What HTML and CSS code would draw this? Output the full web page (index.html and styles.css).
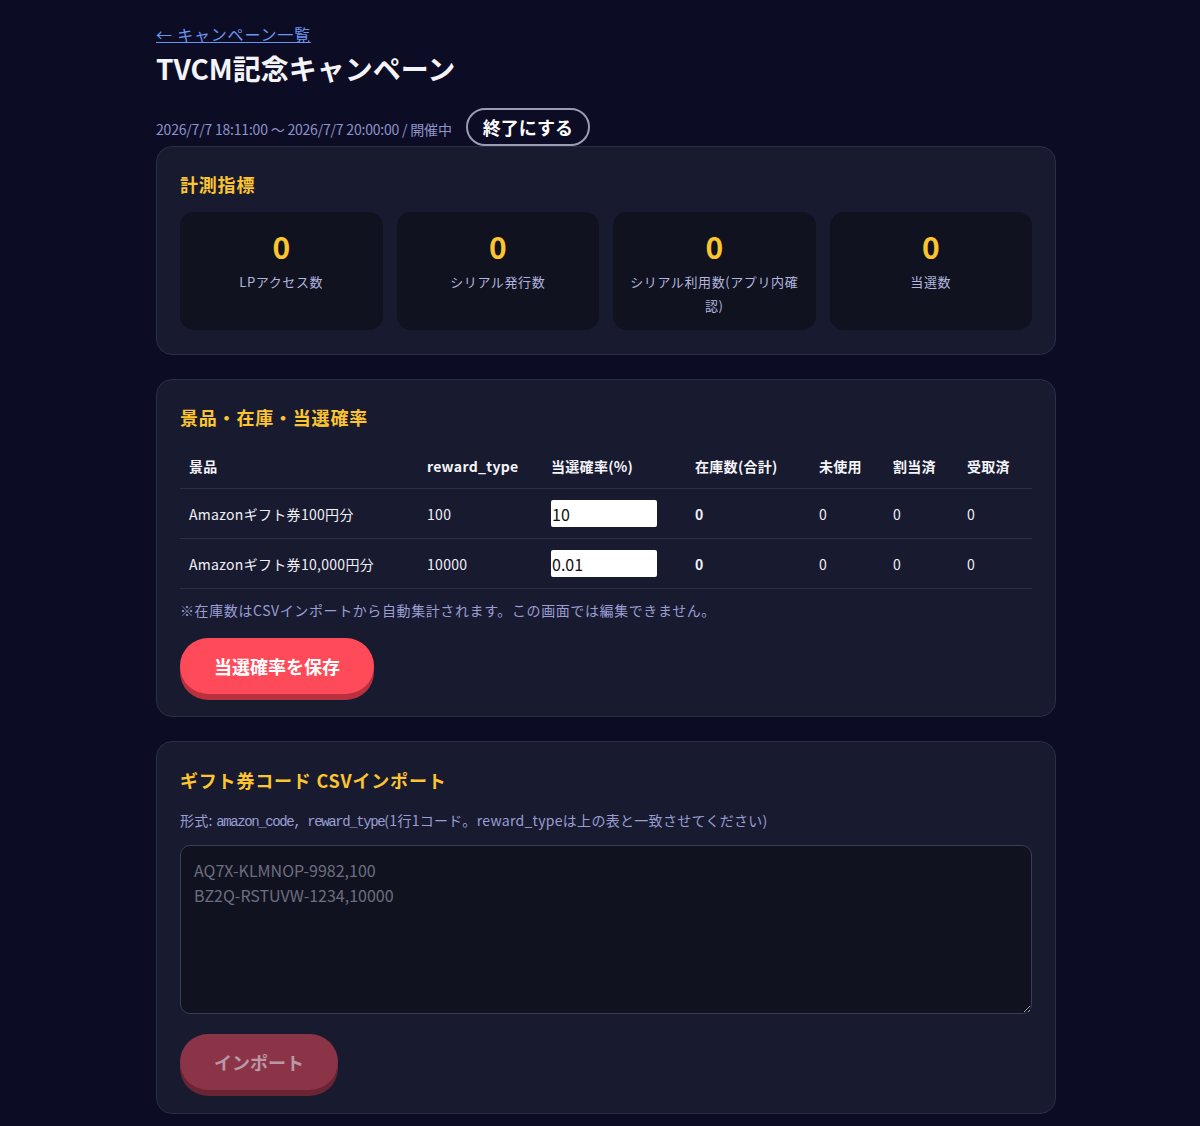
FILE: index.html
```html
<!DOCTYPE html>
<html lang="ja">
<head>
  <meta charset="UTF-8" />
  <meta name="viewport" content="width=device-width, initial-scale=1.0"/>
  <title>TVCM記念キャンペーン - 管理</title>
  <link rel="stylesheet" href="styles.css">
</head>
<body>
  <div class="page">
    <a class="back" href="#">← キャンペーン一覧</a>
    <h1>TVCM記念キャンペーン</h1>

    <div class="period">
      <span>2026/7/7 18:11:00 〜 2026/7/7 20:00:00 / 開催中</span>
      <button class="btn-outline">終了にする</button>
    </div>

    <section class="card card-stats">
      <h2>計測指標</h2>
      <div class="stats">
        <div class="stat"><div class="stat-num">0</div><div class="stat-label">LPアクセス数</div></div>
        <div class="stat"><div class="stat-num">0</div><div class="stat-label">シリアル発行数</div></div>
        <div class="stat"><div class="stat-num">0</div><div class="stat-label">シリアル利用数(アプリ内確認)</div></div>
        <div class="stat"><div class="stat-num">0</div><div class="stat-label">当選数</div></div>
      </div>
    </section>

    <section class="card">
      <h2>景品・在庫・当選確率</h2>
      <table class="prizes">
        <thead>
          <tr>
            <th class="c-name">景品</th>
            <th class="c-type">reward_type</th>
            <th class="c-rate">当選確率(%)</th>
            <th class="c-stock">在庫数(合計)</th>
            <th class="c-small">未使用</th>
            <th class="c-small">割当済</th>
            <th>受取済</th>
          </tr>
        </thead>
        <tbody>
          <tr>
            <td>Amazonギフト券100円分</td>
            <td>100</td>
            <td><input class="rate" type="text" value="10"></td>
            <td class="bold">0</td>
            <td>0</td>
            <td>0</td>
            <td>0</td>
          </tr>
          <tr>
            <td>Amazonギフト券10,000円分</td>
            <td>10000</td>
            <td><input class="rate" type="text" value="0.01"></td>
            <td class="bold">0</td>
            <td>0</td>
            <td>0</td>
            <td>0</td>
          </tr>
        </tbody>
      </table>
      <p class="note">※在庫数はCSVインポートから自動集計されます。この画面では編集できません。</p>
      <button class="btn-primary">当選確率を保存</button>
    </section>

    <section class="card card-import">
      <h2>ギフト券コード CSVインポート</h2>
      <p class="note format">形式: <code>amazon_code, reward_type</code>(1行1コード。reward_typeは上の表と一致させてください)</p>
      <textarea class="csv" placeholder="AQ7X-KLMNOP-9982,100&#10;BZ2Q-RSTUVW-1234,10000"></textarea>
      <button class="btn-primary" disabled>インポート</button>
    </section>
  </div>
</body>
</html>
```

FILE: styles.css
```css
body {
  background-color: #0c0d24;
  color: #f4f4f8;
  font-family: 'Noto Sans CJK JP', 'Noto Sans', sans-serif;
  margin: 0;
  padding: 0;
}

.page {
  width: 900px;
  margin: 0 0 0 156px;
  padding: 22px 0 12px;
}

.back {
  display: inline-block;
  color: #6e93f0;
  font-size: 16px;
  line-height: 24px;
  letter-spacing: 0.8px;
  text-decoration: underline;
}

h1 {
  font-size: 28px;
  font-weight: 700;
  margin: 2px 0 0;
  line-height: 40px;
}

.period {
  display: flex;
  align-items: center;
  gap: 14px;
  margin-top: 20px;
  color: #8e93c9;
  font-size: 14px;
}

.period span {
  margin-top: 4px;
  letter-spacing: -0.2px;
}

.btn-outline {
  background: transparent;
  color: #fff;
  border: 2px solid #9a9cb4;
  border-radius: 999px;
  font-family: inherit;
  font-size: 18px;
  font-weight: 700;
  height: 38px;
  padding: 0 15px;
  cursor: pointer;
}

.card {
  background: #181a30;
  border: 1px solid #2b2e4a;
  border-radius: 16px;
  padding: 23px 23px 22px;
  margin-bottom: 24px;
}

.card-stats {
  padding-bottom: 24px;
}

.card-stats h2 {
  margin-bottom: 14px;
}

.card-import {
  padding-top: 24px;
  padding-bottom: 23px;
}

h2 {
  color: #fcc530;
  font-size: 18px;
  font-weight: 700;
  line-height: 28px;
  letter-spacing: 0.8px;
  margin: 0 0 13px;
}

.stats {
  display: grid;
  grid-template-columns: repeat(4, 1fr);
  gap: 14px;
}

.stat {
  background: #11121f;
  border-radius: 14px;
  height: 118px;
  box-sizing: border-box;
  padding: 15px 16px 0;
  text-align: center;
}

.stat-num {
  color: #fcc530;
  font-size: 30px;
  font-weight: 700;
  line-height: 38px;
}

.stat-label {
  color: #b2b6df;
  font-size: 13px;
  line-height: 24px;
  letter-spacing: 0.6px;
  margin-top: 5px;
}

.prizes {
  width: 100%;
  border-collapse: collapse;
  margin-top: 18px;
}

.prizes th,
.prizes td {
  text-align: left;
  padding: 0 9px;
  border-bottom: 1px solid #2b2e48;
  font-size: 14px;
}

.prizes th {
  font-weight: 700;
  color: #f4f4f8;
  height: 33px;
  padding-bottom: 6px;
  letter-spacing: 0.3px;
}

.prizes td {
  height: 49px;
  color: #f0f0f6;
  letter-spacing: 0.3px;
}

.prizes .c-name { width: 220px; }
.prizes .c-type { width: 106px; }
.prizes .c-rate { width: 126px; }
.prizes .c-stock { width: 106px; }
.prizes .c-small { width: 56px; }

.prizes td.bold {
  font-weight: 700;
}

.rate {
  width: 106px;
  height: 27px;
  box-sizing: border-box;
  border: none;
  border-radius: 2px;
  background: #fff;
  color: #111;
  font-family: 'Noto Sans CJK JP', sans-serif;
  font-size: 16px;
  padding: 0 1px;
}

.note {
  color: #9a9ed2;
  font-size: 14px;
  letter-spacing: 0.6px;
  margin: 10px 0 17px;
  line-height: 22px;
}

.format {
  margin: 0 0 12px;
  padding-top: 2px;
  letter-spacing: 0.3px;
}

.format code {
  font-family: 'Liberation Mono', monospace;
  font-size: 14px;
  letter-spacing: -1.4px;
}

.btn-primary {
  background: #ff4a5a;
  color: #fff;
  border: none;
  border-radius: 999px;
  box-shadow: 0 6px 0 #b9303f;
  font-family: inherit;
  font-size: 18px;
  font-weight: 700;
  height: 56px;
  padding: 0 34px;
  cursor: pointer;
}

.btn-primary:disabled {
  background: #8b3448;
  color: #b99aa4;
  box-shadow: 0 6px 0 #6a2434;
  cursor: default;
}

.csv {
  display: block;
  width: 100%;
  height: 169px;
  box-sizing: border-box;
  background: #11121f;
  border: 1px solid #3a3d5a;
  border-radius: 10px;
  padding: 12px 13px;
  color: #ddd;
  font-family: 'Noto Sans CJK JP', sans-serif;
  font-size: 16px;
  line-height: 25px;
  margin-bottom: 20px;
}

.csv::placeholder {
  color: #6c6e80;
}
```
